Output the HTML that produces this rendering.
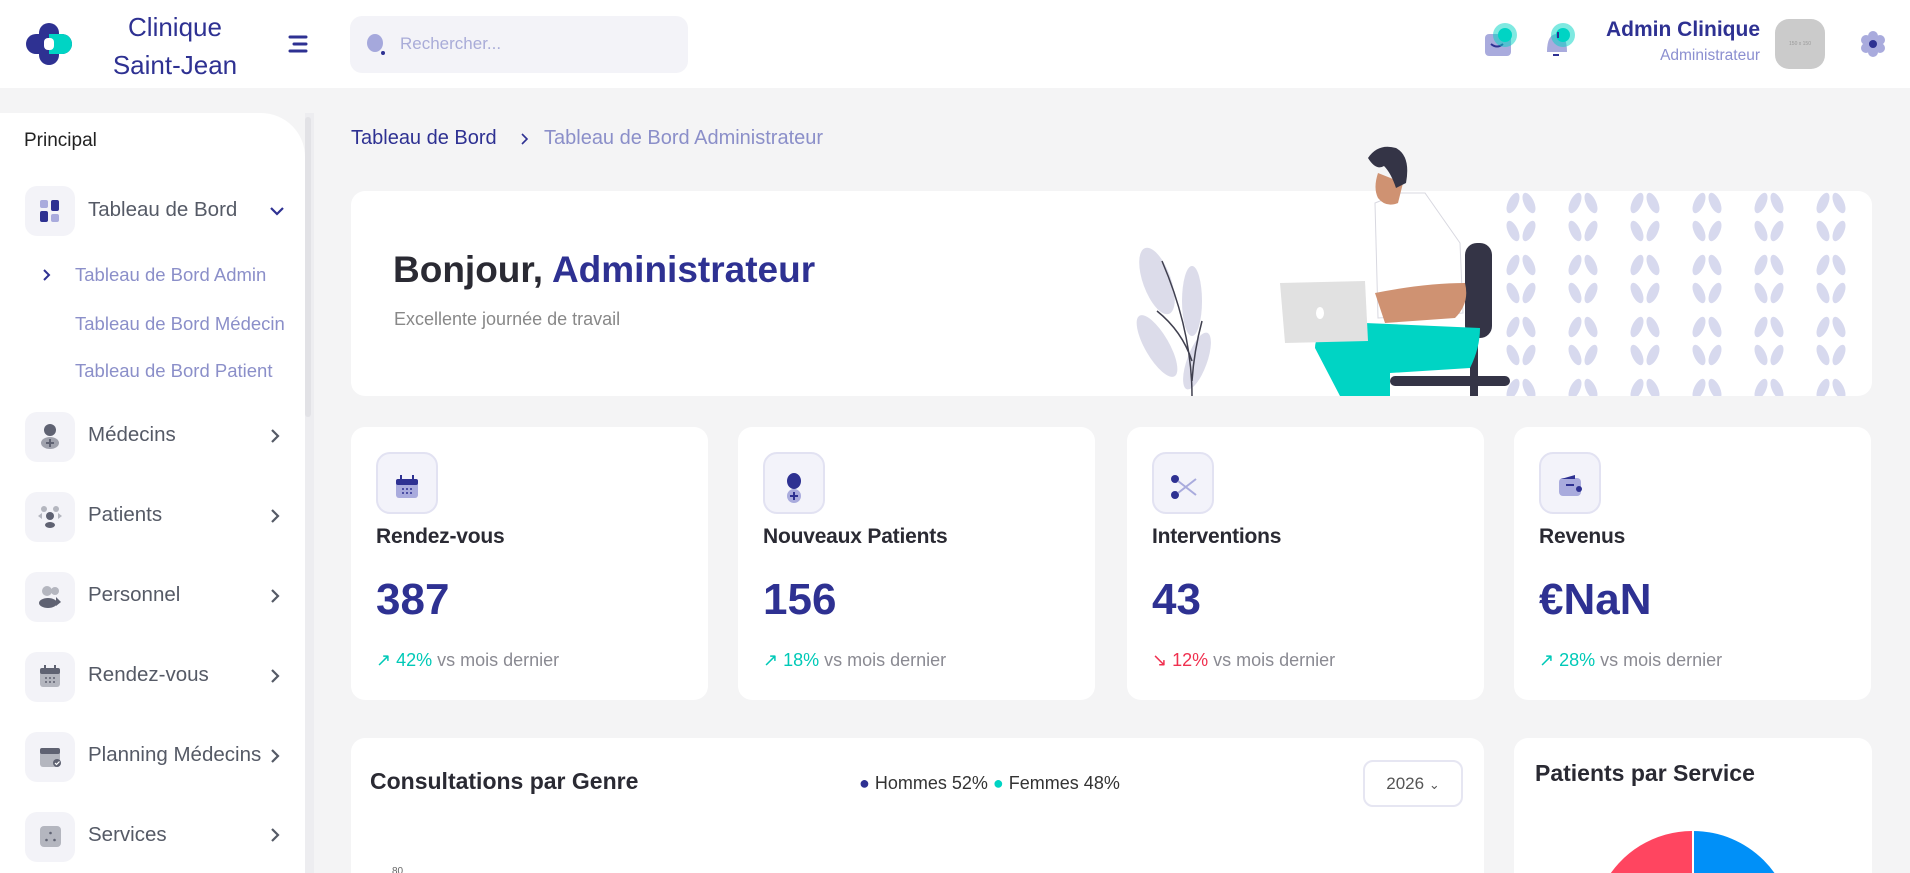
<!DOCTYPE html>
<html><head><meta charset="utf-8"><style>
*{margin:0;padding:0;box-sizing:border-box}
html,body{width:1910px;height:873px;overflow:hidden}
body{background:#f4f4f5;font-family:"Liberation Sans",sans-serif;position:relative}
.a{position:absolute}
.hdr{left:0;top:0;width:1910px;height:88px;background:#fff}
.blue{color:#2e3192}
.side{left:0;top:113px;width:305px;height:760px;background:#fff;border-top-right-radius:44px}
.ib{width:50px;height:50px;border-radius:12px;background:#f3f3f8;left:25px}
.mi{left:88px;font-size:20.5px;color:#555a66}
.sub{left:75px;font-size:18.5px;color:#8b8fc9}
.card{background:#fff;border-radius:14px}
.sc{top:427px;width:357px;height:273px}
.sc .ibx{position:absolute;left:25px;top:25px;width:62px;height:62px;border:2px solid #e2e2f2;background:#f3f3fa;border-radius:14px}
.sc .t{position:absolute;left:25px;top:98px;font-size:21px;color:#2a2a33;font-weight:bold;letter-spacing:-.2px}
.sc .n{position:absolute;left:25px;top:148px;font-size:44px;font-weight:bold;color:#2e3192}
.sc .f{position:absolute;left:25px;top:223px;font-size:18px;color:#8a8a92}
.up{color:#00c9b7}.dn{color:#f0304f}
</style></head><body>
<div class="a hdr"></div>
<svg class="a" style="left:26px;top:23px" width="46" height="42" viewBox="0 0 46 42">
<rect x="13" y="0" width="20" height="42" rx="10" fill="#2e3192"/>
<rect x="0" y="11" width="46" height="20" rx="10" fill="#2e3192"/>
<path d="M23 11h13a10 10 0 0 1 0 20h-13z" fill="#00d4c4"/>
<rect x="18" y="15" width="10" height="12" rx="4" fill="#fff"/>
</svg>
<div class="a blue" style="left:95px;top:8px;width:160px;text-align:center;font-size:26px;line-height:38px">Clinique<br>Saint-Jean</div>
<svg class="a" style="left:288px;top:35px" width="22" height="20"><g stroke="#2e3192" stroke-width="3" stroke-linecap="round"><line x1="2" y1="2" x2="18" y2="2"/><line x1="6" y1="9" x2="18" y2="9"/><line x1="2" y1="16" x2="18" y2="16"/></g></svg>
<div class="a" style="left:350px;top:16px;width:338px;height:57px;background:#f3f3f8;border-radius:12px"></div>
<svg class="a" style="left:366px;top:34px" width="20" height="22"><ellipse cx="9" cy="9" rx="8" ry="9" fill="#a5a8dc"/><circle cx="17" cy="19" r="2" fill="#2e3192"/></svg>
<div class="a" style="left:400px;top:34px;font-size:17px;color:#a9acd8">Rechercher...</div>
<svg class="a" style="left:1483px;top:20px" width="40" height="40"><rect x="2" y="14" width="26" height="22" rx="4" fill="#a9abdd"/><path d="M8 24q6 5 12 0" stroke="#2e3192" stroke-width="2" fill="none"/><circle cx="22" cy="15" r="12" fill="#00d4c4" opacity=".5"/><circle cx="22" cy="15" r="7" fill="#00d4c4"/></svg>
<svg class="a" style="left:1543px;top:20px" width="40" height="40"><path d="M4 32q0-18 10-18t10 18z" fill="#a9abdd"/><rect x="10" y="34" width="6" height="2" fill="#2e3192"/><circle cx="20" cy="15" r="12" fill="#00d4c4" opacity=".5"/><circle cx="20" cy="15" r="7" fill="#00d4c4"/><rect x="14" y="12" width="2" height="6" fill="#2e3192"/></svg>
<div class="a blue" style="left:1540px;top:18px;width:220px;text-align:right;font-size:21px;font-weight:bold">Admin Clinique</div>
<div class="a" style="left:1560px;top:47px;width:200px;text-align:right;font-size:15.5px;color:#8b8fd0">Administrateur</div>
<div class="a" style="left:1775px;top:19px;width:50px;height:50px;border-radius:14px;background:#cbcbcb;font-size:5px;color:#999;text-align:center;line-height:50px">150 x 150</div>
<svg class="a" style="left:1860px;top:31px" width="26" height="26" viewBox="0 0 26 26"><g fill="#a9abdd"><circle cx="13" cy="5" r="5"/><circle cx="13" cy="21" r="5"/><circle cx="6" cy="9" r="5"/><circle cx="20" cy="9" r="5"/><circle cx="6" cy="17" r="5"/><circle cx="20" cy="17" r="5"/><circle cx="13" cy="13" r="8"/></g><circle cx="13" cy="13" r="4" fill="#2e3192"/></svg>

<div class="a side"></div>
<div class="a" style="left:305px;top:113px;width:9px;height:760px;background:#ededf0"></div>
<div class="a" style="left:305px;top:117px;width:6px;height:300px;background:#e2e2e6;border-radius:3px"></div>
<div class="a" style="left:24px;top:130px;font-size:19px;color:#222">Principal</div>
<div class="a ib" style="top:186px"></div>
<svg class="a" style="left:40px;top:200px" width="20" height="22"><rect x="0" y="0" width="8" height="8" rx="2" fill="#a9abdd"/><rect x="11" y="0" width="8" height="11" rx="2" fill="#2e3192"/><rect x="0" y="11" width="8" height="11" rx="2" fill="#2e3192"/><rect x="11" y="14" width="8" height="8" rx="2" fill="#a9abdd"/></svg>
<div class="a mi blue" style="top:198px">Tableau de Bord</div>
<svg class="a" style="left:269px;top:205px" width="16" height="12"><path d="M2 3l6 6 6-6" stroke="#2e3192" stroke-width="2.2" fill="none"/></svg>
<svg class="a" style="left:42px;top:268px" width="10" height="14"><path d="M2 2l5 5-5 5" stroke="#2e3192" stroke-width="2" fill="none"/></svg>
<div class="a sub blue" style="top:264px">Tableau de Bord Admin</div>
<div class="a sub" style="top:313px">Tableau de Bord Médecin</div>
<div class="a sub" style="top:360px">Tableau de Bord Patient</div>

<div class="a ib" style="top:412px"></div>
<svg class="a" style="left:40px;top:424px" width="20" height="26"><circle cx="10" cy="6" r="6" fill="#5f6272"/><ellipse cx="10" cy="19" rx="9" ry="6" fill="#a0a2ad"/><path d="M10 15v8M6 19h8" stroke="#5f6272" stroke-width="2"/></svg>
<div class="a mi" style="top:423px">Médecins</div>
<div class="a ib" style="top:492px"></div>
<svg class="a" style="left:38px;top:505px" width="24" height="24"><circle cx="6" cy="4" r="3" fill="#b4b6bf"/><circle cx="18" cy="4" r="3" fill="#b4b6bf"/><circle cx="12" cy="11" r="4" fill="#5f6272"/><ellipse cx="12" cy="20" rx="5" ry="3" fill="#5f6272"/><path d="M0 11l4-3v6zM24 11l-4-3v6z" fill="#b4b6bf"/></svg>
<div class="a mi" style="top:503px">Patients</div>
<div class="a ib" style="top:572px"></div>
<svg class="a" style="left:38px;top:585px" width="24" height="24"><circle cx="9" cy="6" r="5" fill="#b4b6bf"/><circle cx="17" cy="6" r="4" fill="#b4b6bf"/><ellipse cx="10" cy="18" rx="9" ry="5" fill="#5f6272"/><path d="M18 12l5 5-5 4z" fill="#5f6272"/></svg>
<div class="a mi" style="top:583px">Personnel</div>
<div class="a ib" style="top:652px"></div>
<svg class="a" style="left:40px;top:665px" width="20" height="22"><rect x="0" y="3" width="20" height="19" rx="3" fill="#b4b6bf"/><rect x="0" y="3" width="20" height="6" rx="2" fill="#5f6272"/><rect x="4" y="0" width="2" height="5" fill="#5f6272"/><rect x="14" y="0" width="2" height="5" fill="#5f6272"/><g fill="#5f6272"><circle cx="6" cy="13" r="1"/><circle cx="10" cy="13" r="1"/><circle cx="14" cy="13" r="1"/><circle cx="6" cy="17" r="1"/><circle cx="10" cy="17" r="1"/><circle cx="14" cy="17" r="1"/></g></svg>
<div class="a mi" style="top:663px">Rendez-vous</div>
<div class="a ib" style="top:732px"></div>
<svg class="a" style="left:40px;top:745px" width="22" height="22"><rect x="0" y="3" width="20" height="19" rx="3" fill="#b4b6bf"/><rect x="0" y="3" width="20" height="6" rx="2" fill="#5f6272"/><circle cx="17" cy="18" r="4" fill="#5f6272"/><path d="M15 18l1.5 1.5 3-3" stroke="#fff" stroke-width="1.2" fill="none"/></svg>
<div class="a mi" style="top:743px">Planning Médecins</div>
<div class="a ib" style="top:812px"></div>
<svg class="a" style="left:40px;top:826px" width="22" height="22"><rect x="0" y="0" width="21" height="21" rx="4" fill="#b4b6bf"/><g fill="#5f6272"><circle cx="10.5" cy="7" r="1.3"/><circle cx="6.5" cy="14" r="1.3"/><circle cx="14.5" cy="14" r="1.3"/></g></svg>
<div class="a mi" style="top:823px">Services</div>
<svg class="a" style="left:270px;top:428px" width="12" height="420"><g stroke="#555a66" stroke-width="2.2" fill="none"><path d="M2 2l6 6-6 6"/><path d="M2 82l6 6-6 6"/><path d="M2 162l6 6-6 6"/><path d="M2 242l6 6-6 6"/><path d="M2 322l6 6-6 6"/><path d="M2 401l6 6-6 6"/></g></svg>

<div class="a blue" style="left:351px;top:127px;font-size:20px">Tableau de Bord</div>
<svg class="a" style="left:520px;top:132px" width="10" height="14"><path d="M2 2l5 5-5 5" stroke="#2e3192" stroke-width="1.6" fill="none"/></svg>
<div class="a" style="left:544px;top:127px;font-size:20px;color:#8b8fc9">Tableau de Bord Administrateur</div>

<div class="a card" style="left:351px;top:191px;width:1521px;height:205px;overflow:hidden">
 <svg class="a" style="left:1140px;top:0" width="381" height="205" viewBox="0 0 381 205">
  <defs><pattern id="p" width="62" height="62" patternUnits="userSpaceOnUse"><g fill="#d7d9ee"><ellipse cx="22" cy="12" rx="5" ry="11" transform="rotate(25 22 12)"/><ellipse cx="38" cy="12" rx="5" ry="11" transform="rotate(-25 38 12)"/><ellipse cx="22" cy="40" rx="5" ry="11" transform="rotate(-25 22 40)"/><ellipse cx="38" cy="40" rx="5" ry="11" transform="rotate(25 38 40)"/></g></pattern></defs>
  <rect width="381" height="205" fill="url(#p)"/>
 </svg>
 <svg class="a" style="left:781px;top:40px" width="100" height="165"><g fill="#dcdcea"><ellipse cx="25" cy="50" rx="14" ry="35" transform="rotate(-20 25 50)"/><ellipse cx="60" cy="70" rx="10" ry="35"/><ellipse cx="25" cy="115" rx="12" ry="35" transform="rotate(-30 25 115)"/><ellipse cx="65" cy="130" rx="10" ry="30" transform="rotate(20 65 130)"/></g><path d="M30 30q30 70 30 135M25 80q25 20 35 50M70 90q-8 30-10 60" stroke="#40404f" stroke-width="1.5" fill="none"/></svg>
</div>
<div class="a" style="left:393px;top:249px;font-size:37px;font-weight:bold;color:#2a2a33">Bonjour, <span class="blue">Administrateur</span></div>
<div class="a" style="left:394px;top:309px;font-size:18px;color:#888">Excellente journée de travail</div>
<svg class="a" style="left:1270px;top:143px" width="240" height="253" viewBox="0 0 240 253">
 <rect x="195" y="100" width="27" height="95" rx="12" fill="#343446"/>
 <rect x="200" y="180" width="8" height="73" fill="#343446"/>
 <rect x="120" y="233" width="120" height="10" rx="5" fill="#343446"/>
 <path d="M105 60l25-10 25 0 35 50 3 70-85 5z" fill="#fff" stroke="#d8d8e0"/>
 <path d="M105 150q50-10 90-10 5 20-10 35l-70 5z" fill="#cf9272"/>
 <path d="M45 205q0-25 50-25l115 5q0 20-10 40l-80 5 0 23h-50z" fill="#00d4c4"/>
 <path d="M10 140l85-2 3 60-83 2z" fill="#e1e1e1"/>
 <ellipse cx="50" cy="170" rx="4" ry="6" fill="#fff"/>
 <path d="M108 30q-5 15 0 25 8 10 20 5l5-20z" fill="#cf9272"/>
 <path d="M98 15q10-15 28-10 15 8 10 35l-10 5q-5-15-12-22-8 5-16-8z" fill="#343446"/>
</svg>

<div class="a card sc" style="left:351px">
 <div class="ibx"></div>
 <svg class="a" style="left:45px;top:48px" width="22" height="24"><rect x="0" y="4" width="22" height="19" rx="3" fill="#a9abdd"/><rect x="0" y="4" width="22" height="6" rx="2" fill="#2e3192"/><rect x="4" y="0" width="2" height="5" fill="#2e3192"/><rect x="16" y="0" width="2" height="5" fill="#2e3192"/><g fill="#2e3192"><circle cx="7" cy="14" r="1"/><circle cx="11" cy="14" r="1"/><circle cx="15" cy="14" r="1"/><circle cx="7" cy="18" r="1"/><circle cx="11" cy="18" r="1"/><circle cx="15" cy="18" r="1"/></g></svg>
 <div class="t">Rendez-vous</div><div class="n">387</div>
 <div class="f"><span class="up">↗ 42%</span> vs mois dernier</div>
</div>
<div class="a card sc" style="left:738px">
 <div class="ibx"></div>
 <svg class="a" style="left:46px;top:46px" width="20" height="30"><ellipse cx="10" cy="8" rx="7" ry="8" fill="#2e3192"/><circle cx="10" cy="23" r="7" fill="#a9abdd"/><path d="M10 19v8M6 23h8" stroke="#2e3192" stroke-width="2"/></svg>
 <div class="t">Nouveaux Patients</div><div class="n">156</div>
 <div class="f"><span class="up">↗ 18%</span> vs mois dernier</div>
</div>
<div class="a card sc" style="left:1127px">
 <div class="ibx"></div>
 <svg class="a" style="left:43px;top:47px" width="28" height="26"><circle cx="5" cy="5" r="4" fill="#2e3192"/><circle cx="5" cy="21" r="4" fill="#2e3192"/><path d="M8 7l18 14M8 19l18-14" stroke="#a9abdd" stroke-width="2"/></svg>
 <div class="t">Interventions</div><div class="n">43</div>
 <div class="f"><span class="dn">↘ 12%</span> vs mois dernier</div>
</div>
<div class="a card sc" style="left:1514px">
 <div class="ibx"></div>
 <svg class="a" style="left:45px;top:48px" width="24" height="22"><rect x="0" y="3" width="22" height="18" rx="4" fill="#a9abdd"/><path d="M2 4l14-4v4z" fill="#2e3192"/><rect x="7" y="9" width="8" height="2" fill="#2e3192"/><circle cx="20" cy="14" r="3" fill="#2e3192"/></svg>
 <div class="t">Revenus</div><div class="n">€NaN</div>
 <div class="f"><span class="up">↗ 28%</span> vs mois dernier</div>
</div>

<div class="a card" style="left:351px;top:738px;width:1133px;height:135px;border-bottom-left-radius:0;border-bottom-right-radius:0"></div>
<div class="a" style="left:370px;top:768px;font-size:23px;font-weight:bold;color:#2a2a33">Consultations par Genre</div>
<div class="a" style="left:859px;top:773px;font-size:18px;color:#333"><span style="color:#2e3192">●</span> Hommes 52% <span style="color:#00d4c4">●</span> Femmes 48%</div>
<div class="a" style="left:1363px;top:760px;width:100px;height:47px;border:2px solid #e6e6f2;border-radius:10px;font-size:17px;color:#555;text-align:center;line-height:43px">2026 <span style="font-size:13px">⌄</span></div>
<div class="a" style="left:392px;top:866px;font-size:10px;color:#666">80</div>
<div class="a card" style="left:1514px;top:738px;width:358px;height:135px;overflow:hidden;border-bottom-left-radius:0;border-bottom-right-radius:0">
 <svg class="a" style="left:79px;top:93px" width="200" height="200" viewBox="-100 -100 200 200">
  <path d="M0 0V-100A100 100 0 0 1 100 0z" fill="#0090f8"/>
  <path d="M0 0L-90 -45A100 100 0 0 1 0 -100z" fill="#ff4560"/>
  <path d="M0 0L-100 10A100 100 0 0 1 -90 -45z" fill="#feb019"/>
  <path d="M0 0V-100M0 0L-90 -45" stroke="#fff" stroke-width="2"/>
 </svg>
</div>
<div class="a" style="left:1535px;top:760px;font-size:23px;font-weight:bold;color:#2a2a33">Patients par Service</div>
</body></html>
